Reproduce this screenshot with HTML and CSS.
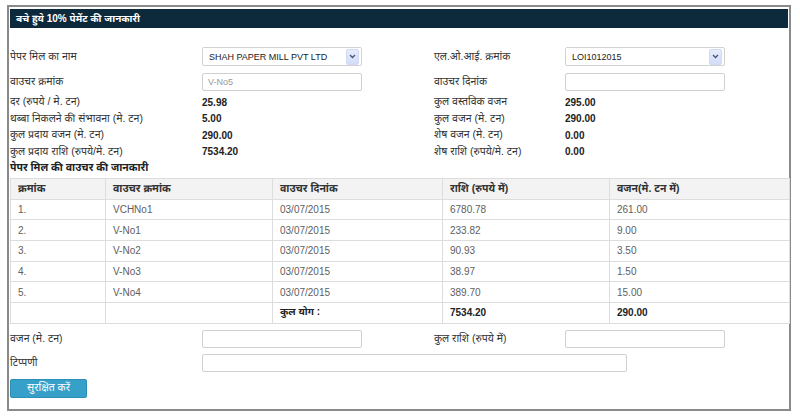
FILE: index.html
```html
<!DOCTYPE html>
<html lang="hi">
<head>
<meta charset="utf-8">
<title>बचे हुये 10% पेमेंट की जानकारी</title>
<link rel="stylesheet" href="styles.css">
</head>
<body>
<div class="panel">
  <div class="title">बचे हुये 10% पेमेंट की जानकारी</div>
  <div class="form top">
    <div class="lbl r1">पेपर मिल का नाम</div>
    <div class="fld r1"><div class="select"><span class="sel-text">SHAH PAPER MILL PVT LTD</span><span class="arrow"><svg width="7" height="5" viewBox="0 0 7 5"><path d="M1 1 L3.5 3.5 L6 1" fill="none" stroke="#4a5270" stroke-width="1.3"/></svg></span></div></div>
    <div class="gap r1"></div>
    <div class="lbl r1">एल.ओ.आई. क्रमांक</div>
    <div class="fld r1"><div class="select"><span class="sel-text">LOI1012015</span><span class="arrow"><svg width="7" height="5" viewBox="0 0 7 5"><path d="M1 1 L3.5 3.5 L6 1" fill="none" stroke="#4a5270" stroke-width="1.3"/></svg></span></div></div>

    <div class="lbl r2">वाउचर क्रमांक</div>
    <div class="fld r2"><div class="input muted">V-No5</div></div>
    <div class="gap r2"></div>
    <div class="lbl r2">वाउचर दिनांक</div>
    <div class="fld r2"><div class="input"></div></div>

    <div class="lbl info first">दर (रुपये / मे. टन)</div>
    <div class="val info first">25.98</div>
    <div class="gap info first"></div>
    <div class="lbl info first">कुल वस्तविक वजन</div>
    <div class="val info first">295.00</div>

    <div class="lbl info">थब्बा निकलने की संभावना (मे. टन)</div>
    <div class="val info">5.00</div>
    <div class="gap info"></div>
    <div class="lbl info">कुल वजन (मे. टन)</div>
    <div class="val info">290.00</div>

    <div class="lbl info">कुल प्रदाय वजन (मे. टन)</div>
    <div class="val info">290.00</div>
    <div class="gap info"></div>
    <div class="lbl info">शेष वजन (मे. टन)</div>
    <div class="val info">0.00</div>

    <div class="lbl info">कुल प्रदाय राशि (रुपये/मे. टन)</div>
    <div class="val info">7534.20</div>
    <div class="gap info"></div>
    <div class="lbl info">शेष राशि (रुपये/मे. टन)</div>
    <div class="val info">0.00</div>
  </div>

  <div class="subhead">पेपर मिल की वाउचर की जानकारी</div>

  <table class="grid">
    <colgroup>
      <col class="c1"><col class="c2"><col class="c3"><col class="c4"><col class="c5">
    </colgroup>
    <thead>
      <tr><th>क्रमांक</th><th>वाउचर क्रमांक</th><th>वाउचर दिनांक</th><th>राशि (रुपये में)</th><th>वजन(मे. टन में)</th></tr>
    </thead>
    <tbody>
      <tr><td>1.</td><td>VCHNo1</td><td>03/07/2015</td><td>6780.78</td><td>261.00</td></tr>
      <tr><td>2.</td><td>V-No1</td><td>03/07/2015</td><td>233.82</td><td>9.00</td></tr>
      <tr><td>3.</td><td>V-No2</td><td>03/07/2015</td><td>90.93</td><td>3.50</td></tr>
      <tr><td>4.</td><td>V-No3</td><td>03/07/2015</td><td>38.97</td><td>1.50</td></tr>
      <tr><td>5.</td><td>V-No4</td><td>03/07/2015</td><td>389.70</td><td>15.00</td></tr>
      <tr class="total"><td></td><td></td><td>कुल योग :</td><td>7534.20</td><td>290.00</td></tr>
    </tbody>
  </table>

  <div class="form bottom">
    <div class="lbl b1">वजन (मे. टन)</div>
    <div class="fld b1"><div class="input"></div></div>
    <div class="gap b1"></div>
    <div class="lbl b1">कुल राशि (रुपये में)</div>
    <div class="fld b1"><div class="input"></div></div>

    <div class="lbl b2">टिप्पणी</div>
    <div class="fld b2 wide"><div class="input"></div></div>
  </div>

  <div class="actions"><button class="btn" type="button">सुरक्षित करें</button></div>
</div>
</body>
</html>
```
FILE: styles.css
```css
* { box-sizing: border-box; }
html, body { margin: 0; padding: 0; background: #ffffff; }
body {
  font-family: "Liberation Sans", Arial, "Noto Sans Devanagari", "Lohit Devanagari", "Noto Sans", sans-serif;
  font-size: 10px;
  color: #333333;
}
.panel {
  margin: 5px 0 0 7px;
  width: 784px;
  height: 406px;
  border: 2px solid #8a8a8a;
  padding: 2px 1px 0 1px;
  background: #ffffff;
}
.title {
  height: 19px;
  background: #0c2a3c;
  color: #ffffff;
  font-weight: bold;
  font-size: 10px;
  line-height: 19px;
  padding-left: 6px;
}
.form {
  display: grid;
  grid-template-columns: 192px 160px 72px 131px 160px;
  align-items: center;
}
.form.top { margin-top: 19px; }
.r1 { height: 19px; }
.r2 { height: 18px; margin-top: 7px; }
.info { height: 16.5px; }
.info.first { margin-top: 3px; }
.lbl { display: flex; align-items: center; font-size: 10.5px; }
.fld { display: flex; align-items: center; }
.val { display: flex; align-items: center; font-weight: bold; color: #222; }
.select {
  width: 160px;
  height: 19px;
  border: 1px solid #d2d2d2;
  border-radius: 2px;
  display: flex;
  align-items: center;
  justify-content: space-between;
  padding-left: 6px;
  background: #ffffff;
}
.sel-text { font-size: 9px; color: #222; }
.arrow {
  width: 13px;
  height: 16px;
  margin-right: 2px;
  background: linear-gradient(#e6ecfc, #d2ddf8);
  border: 1px solid #d0daf3;
  border-radius: 2px;
  display: flex;
  align-items: center;
  justify-content: center;
}
.input {
  width: 160px;
  height: 18px;
  border: 1px solid #d0d0d0;
  border-radius: 2px;
  padding-left: 5px;
  display: flex;
  align-items: center;
  font-size: 9px;
  background: #ffffff;
}
.input.muted { color: #9a9a9a; }
.subhead {
  height: 15px;
  line-height: 15px;
  font-weight: bold;
  font-size: 10.5px;
  color: #222;
}
.grid {
  margin-top: 3px;
  width: 779px;
  border-collapse: collapse;
  table-layout: fixed;
}
.c1 { width: 95px; }
.c2 { width: 167px; }
.c3 { width: 170px; }
.c4 { width: 167px; }
.c5 { width: 180px; }
.grid th, .grid td {
  border: 1px solid #dddddd;
  height: 20.7px;
  padding: 0 0 0 7px;
  text-align: left;
  font-size: 10px;
}
.grid th { background: #f3f3f3; font-weight: bold; color: #333; font-size: 10.5px; }
.grid td { color: #606060; }
.grid tr.total td { font-weight: bold; color: #222; }
.form.bottom { margin-top: 6px; }
.b1 { height: 18px; }
.b2 { height: 18px; margin-top: 6px; }
.wide { grid-column: 2 / span 4; }
.wide .input { width: 425px; }
.actions { margin-top: 7px; }
.btn {
  width: 77px;
  height: 19px;
  background: #36a0c8;
  border: 1px solid #2a8fb6;
  border-radius: 2px;
  color: #ffffff;
  font-family: inherit;
  font-size: 10.5px;
  padding: 0;
}
```
